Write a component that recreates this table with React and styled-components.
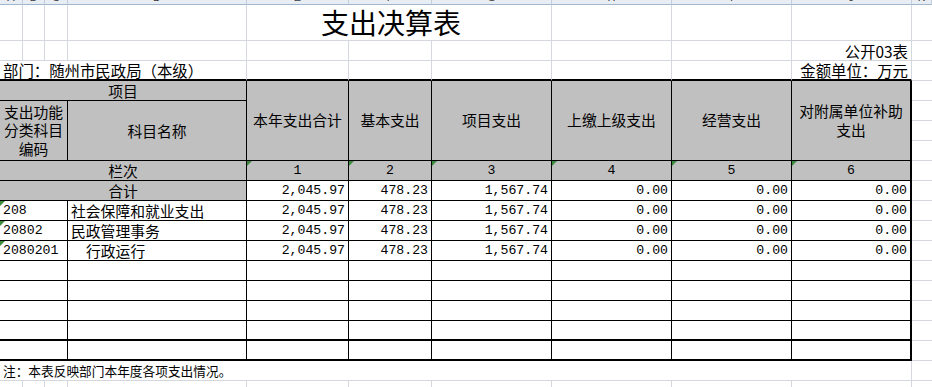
import React from "react";
import styled, { createGlobalStyle, css } from "styled-components";

const GlobalStyle = createGlobalStyle`
  html, body {
    margin: 0;
    padding: 0;
    background: #fff;
  }
  body {
    width: 932px;
    height: 387px;
    overflow: hidden;
    font-family: "Noto Sans CJK SC", sans-serif;
    color: #000;
  }
`;

// A..K column widths as in the sheet
const COLS = [23, 22, 23, 179, 102, 83, 120, 120, 120, 120, 20];
const LETTERS = ["A", "B", "C", "D", "E", "F", "G", "H", "I", "J", "K"];
const GRID = "#d4d8de";

const Sheet = styled.div`
  display: grid;
  grid-template-columns: ${COLS.map((w) => w + "px").join(" ")};
  grid-template-rows: 5px 36px repeat(18, 20px);
  width: 932px;
`;

const place = css`
  box-sizing: border-box;
  min-width: 0;
  display: flex;
  align-items: center;
  white-space: nowrap;
  overflow: hidden;
  grid-column: ${(p) => p.$col} / span ${(p) => p.$span || 1};
  grid-row: ${(p) => p.$row} / span ${(p) => p.$rows || 1};
`;

const ColumnHead = styled.div`
  ${place}
  align-items: flex-end;
  justify-content: center;
  background: #e8edf4;
  border-right: 1px solid #c3cedc;
  border-bottom: 1px solid #9eb6ce;
  font-family: "Liberation Sans", sans-serif;
  font-size: 11px;
  line-height: 11px;
  color: #3a3a3a;
  padding-bottom: 1px;
`;

const GridCell = styled.div`
  ${place}
  justify-content: ${(p) => (p.$right ? "flex-end" : "flex-start")};
  border-right: ${(p) => (p.$noRight ? "none" : `1px solid ${GRID}`)};
  border-bottom: ${(p) => (p.$thickBottom ? "2px solid #000" : `1px solid ${GRID}`)};
  font-size: 15.4px;
  line-height: 18px;
  padding: 0 3px;
`;

const Title = styled.div`
  ${place}
  justify-content: center;
  align-items: flex-end;
  padding: 0 16px 2px 0;
  border-right: 1px solid ${GRID};
  border-bottom: 1px solid ${GRID};
  font-size: 28px;
  line-height: 32px;
`;

const Note = styled(GridCell)`
  font-size: 12.7px;
`;

const Cell = styled.div`
  ${place}
  position: relative;
  justify-content: ${(p) =>
    p.$align === "right" ? "flex-end" : p.$align === "left" ? "flex-start" : "center"};
  background: ${(p) => (p.$fill ? "#c0c0c0" : "#fff")};
  border-right: ${(p) => (p.$thickRight ? 2 : 1)}px solid #000;
  border-bottom: ${(p) => (p.$thickBottom ? 2 : 1)}px solid #000;
  padding: 0 3px 0 ${(p) => (p.$indent ? 18 : 3)}px;
  font-family: ${(p) =>
    p.$mono ? `"Liberation Mono", monospace` : `"Noto Sans CJK SC", sans-serif`};
  font-size: ${(p) => (p.$mono ? "13.2px" : "14.8px")};
  line-height: 18px;
  ${(p) =>
    p.$wrap &&
    css`
      white-space: normal;
      text-align: center;
      line-height: 18.5px;
    `}
  ${(p) =>
    p.$mark &&
    css`
      &::before {
        content: "";
        position: absolute;
        top: 0;
        left: 0;
        border-top: 5px solid #3d8c3d;
        border-right: 5px solid transparent;
      }
    `}
`;

const headings = [
  "本年支出合计",
  "基本支出",
  "项目支出",
  "上缴上级支出",
  "经营支出",
  "对附属单位补助支出",
];

const amounts = ["2,045.97", "478.23", "1,567.74", "0.00", "0.00", "0.00"];

const items = [
  { code: "208", name: "社会保障和就业支出", values: amounts },
  { code: "20802", name: "民政管理事务", values: amounts },
  { code: "2080201", name: "行政运行", indent: true, values: amounts },
];

const blankRows = [14, 15, 16, 17, 18];
const VALUE_COLS = [5, 6, 7, 8, 9, 10];

const App = () => {
  return (
    <>
      <GlobalStyle />
      <Sheet>
        {LETTERS.map((l, i) => (
          <ColumnHead key={l} $col={i + 1} $row={1}>
            {l}
          </ColumnHead>
        ))}

        {/* title row */}
        {[1, 2, 3, 4].map((c) => (
          <GridCell key={"t" + c} $col={c} $row={2} />
        ))}
        <Title $col={5} $span={3} $row={2}>支出决算表</Title>
        {[8, 9, 10].map((c) => (
          <GridCell key={"t" + c} $col={c} $row={2} />
        ))}

        {/* caption rows */}
        {[1, 2, 3, 4, 5, 6, 7, 8, 9].map((c) => (
          <GridCell key={"c" + c} $col={c} $row={3} />
        ))}
        <GridCell $col={10} $row={3} $right>公开03表</GridCell>
        <GridCell $col={1} $span={4} $row={4} $thickBottom>
          部门：随州市民政局（本级）
        </GridCell>
        {[5, 6, 7, 8, 9].map((c) => (
          <GridCell key={"d" + c} $col={c} $row={4} $thickBottom />
        ))}
        <GridCell $col={10} $row={4} $right $thickBottom>
          金额单位：万元
        </GridCell>

        {/* column K to the right of the table */}
        {Array.from({ length: 19 }, (_, i) => (
          <GridCell key={"k" + i} $col={11} $row={i + 2} $noRight />
        ))}

        {/* table head */}
        <Cell $col={1} $span={4} $row={5} $fill>项目</Cell>
        {headings.map((h, i) => (
          <Cell
            key={h}
            $col={5 + i}
            $row={5}
            $rows={4}
            $fill
            $wrap
            $thickRight={i === 5}
          >
            {h}
          </Cell>
        ))}
        <Cell $col={1} $span={3} $row={6} $rows={3} $fill $wrap>
          支出功能分类科目编码
        </Cell>
        <Cell $col={4} $row={6} $rows={3} $fill>科目名称</Cell>

        <Cell $col={1} $span={4} $row={9} $fill>栏次</Cell>
        {VALUE_COLS.map((c, i) => (
          <Cell key={"n" + c} $col={c} $row={9} $fill $mono $mark $thickRight={i === 5}>
            {i + 1}
          </Cell>
        ))}

        <Cell $col={1} $span={4} $row={10} $fill>合计</Cell>
        {amounts.map((v, i) => (
          <Cell key={"s" + i} $col={5 + i} $row={10} $mono $align="right" $thickRight={i === 5}>
            {v}
          </Cell>
        ))}

        {items.map((item, r) => (
          <React.Fragment key={item.code}>
            <Cell $col={1} $span={3} $row={11 + r} $mono $mark $align="left">
              {item.code}
            </Cell>
            <Cell $col={4} $row={11 + r} $align="left" $indent={item.indent}>
              {item.name}
            </Cell>
            {item.values.map((v, i) => (
              <Cell
                key={i}
                $col={5 + i}
                $row={11 + r}
                $mono
                $align="right"
                $thickRight={i === 5}
              >
                {v}
              </Cell>
            ))}
          </React.Fragment>
        ))}

        {blankRows.map((r) => (
          <React.Fragment key={"b" + r}>
            <Cell $col={1} $span={3} $row={r} $thickBottom={r >= 17} />
            <Cell $col={4} $row={r} $thickBottom={r >= 17} />
            {VALUE_COLS.map((c, i) => (
              <Cell
                key={c}
                $col={c}
                $row={r}
                $thickBottom={r >= 17}
                $thickRight={i === 5}
              />
            ))}
          </React.Fragment>
        ))}

        {/* note */}
        <Note $col={1} $span={10} $row={19}>
          注：本表反映部门本年度各项支出情况。
        </Note>
        {[1, 2, 3, 4, 5, 6, 7, 8, 9, 10].map((c) => (
          <GridCell key={"z" + c} $col={c} $row={20} />
        ))}
      </Sheet>
    </>
  );
};

export default App;
